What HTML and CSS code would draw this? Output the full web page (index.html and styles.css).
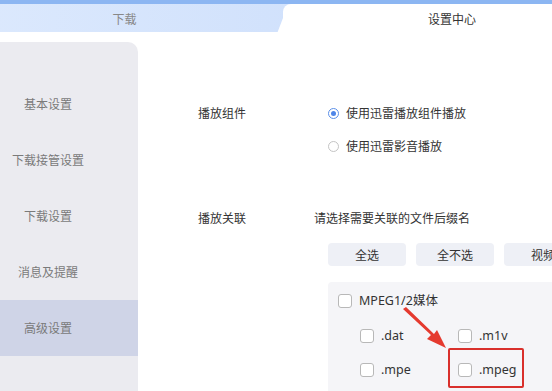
FILE: index.html
```html
<!DOCTYPE html>
<html lang="zh-CN">
<head>
    <meta charset="UTF-8">
    <title>设置中心</title>
    <link rel="stylesheet" href="styles.css">
</head>
<body>
    <div class="tabbar">
        <div class="tab">下载</div>
        <div class="tab active">设置中心</div>
    </div>
    <div class="main">
        <div class="sidebar">
            <div class="nav-item">基本设置</div>
            <div class="nav-item">下载接管设置</div>
            <div class="nav-item">下载设置</div>
            <div class="nav-item">消息及提醒</div>
            <div class="nav-item current">高级设置</div>
        </div>
        <div class="content">
            <div class="row">
                <div class="label">播放组件</div>
                <div class="options">
                    <div class="radio on"><span class="dot"></span>使用迅雷播放组件播放</div>
                    <div class="radio"><span class="dot"></span>使用迅雷影音播放</div>
                </div>
            </div>
            <div class="row assoc">
                <div class="label">播放关联</div>
                <div class="assoc-body">
                    <div class="hint">请选择需要关联的文件后缀名</div>
                    <div class="btns">
                        <div class="btn">全选</div>
                        <div class="btn">全不选</div>
                        <div class="btn">视频</div>
                    </div>
                    <div class="group">
                        <div class="check head"><span class="box"></span>MPEG1/2媒体</div>
                        <div class="exts">
                            <div class="check"><span class="box"></span>.dat</div>
                            <div class="check"><span class="box"></span>.m1v</div>
                            <div class="check"><span class="box"></span>.mpe</div>
                            <div class="check"><span class="box"></span>.mpeg</div>
                        </div>
                    </div>
                </div>
            </div>
        </div>
    </div>
    <svg class="arrow" width="60" height="50" viewBox="0 0 60 50">
        <path d="M3,2 L31,28 L27,32 L46,41 L37,23 L34,27 L6,0 Z" fill="#e53a2f"/>
    </svg>
    <div class="mark"></div>
</body>
</html>
```

FILE: styles.css
```css
body {
    margin: 0;
    width: 552px; height: 391px;
    overflow: hidden;
    background: #fff;
    font-family: "Microsoft YaHei", "Noto Sans CJK SC", sans-serif;
    font-size: 12px;
    position: relative;
}
.tabbar {
    display: flex;
    height: 32px;
    width: 655px;
    margin-left: -34px;
    border-top: 4px solid #8cb6f2;
    box-sizing: border-box;
    background: linear-gradient(90deg, #dce9fd, #c6dafb);
}
.tab { flex: 0 0 317px; display: flex; align-items: center; justify-content: center; color: #888; }
.tab.active {
    flex: 0 0 338px;
    background: #fff;
    color: #333;
    position: relative;
    border-top-left-radius: 8px;
}
.tab.active::before {
    content: "";
    position: absolute;
    left: 0; top: 0;
    width: 24px; height: 28px;
    background: #fff;
    transform: skewX(-21deg);
    border-top-left-radius: 7px;
}
.main { display: flex; padding-top: 10px; }
.sidebar {
    width: 138px;
    height: 360px;
    background: #ebebf0;
    border-top-right-radius: 10px;
    padding-top: 34px;
    box-sizing: border-box;
    flex-shrink: 0;
}
.nav-item {
    width: 96px;
    height: 56px;
    line-height: 56px;
    text-align: center;
    color: #7a7a7a;
    box-sizing: content-box;
    padding-right: 42px;
}
.current { background: #cfd4e7; }
.content { flex: 1; padding-left: 60px; padding-top: 63px; color: #333; }
.row { display: flex; }
.label { width: 116px; flex-shrink: 0; line-height: 16px; }
.options { display: flex; flex-direction: column; gap: 17px; padding-left: 14px; }
.radio { display: flex; align-items: center; gap: 7px; line-height: 16px; white-space: nowrap; }
.dot {
    width: 11px; height: 11px;
    border: 1px solid #c4c4c4;
    border-radius: 50%;
    box-sizing: border-box;
    position: relative;
}
.radio.on .dot { border-color: #5b8fe8; }
.radio.on .dot::after {
    content: "";
    position: absolute;
    left: 2px; top: 2px;
    width: 5px; height: 5px;
    border-radius: 50%;
    background: #4f86e8;
}
.assoc { margin-top: 56px; }
.assoc-body { flex: 1; }
.hint { line-height: 16px; }
.btns { display: flex; gap: 10px; margin-top: 17px; padding-left: 14px; white-space: nowrap; }
.btn {
    flex: 0 0 78px;
    height: 23px;
    line-height: 23px;
    text-align: center;
    background: #eef0f6;
    border-radius: 4px;
}
.group {
    margin-top: 16px;
    margin-left: 14px;
    background: #f5f5f8;
    border-radius: 4px;
    height: 120px;
    padding: 11px 0 0 10px;
    box-sizing: border-box;
    font-family: "Microsoft YaHei", "Noto Sans", "Noto Sans CJK SC", sans-serif;
}
.check { display: flex; align-items: center; gap: 7px; line-height: 16px; font-size: 12.5px; color: #333; }
.box {
    width: 14px; height: 14px;
    border: 1px solid #b8b8b8;
    border-radius: 3px;
    background: #fff;
    box-sizing: border-box;
}
.exts {
    display: grid;
    grid-template-columns: 98px 98px;
    row-gap: 18px;
    padding-left: 22px;
    margin-top: 19px;
}
.arrow { position: absolute; left: 400px; top: 307px; }
.mark {
    position: absolute;
    left: 448px; top: 348px;
    width: 76px; height: 40px;
    border: 2px solid #d9302c;
    border-radius: 2px;
    box-sizing: border-box;
}
```
